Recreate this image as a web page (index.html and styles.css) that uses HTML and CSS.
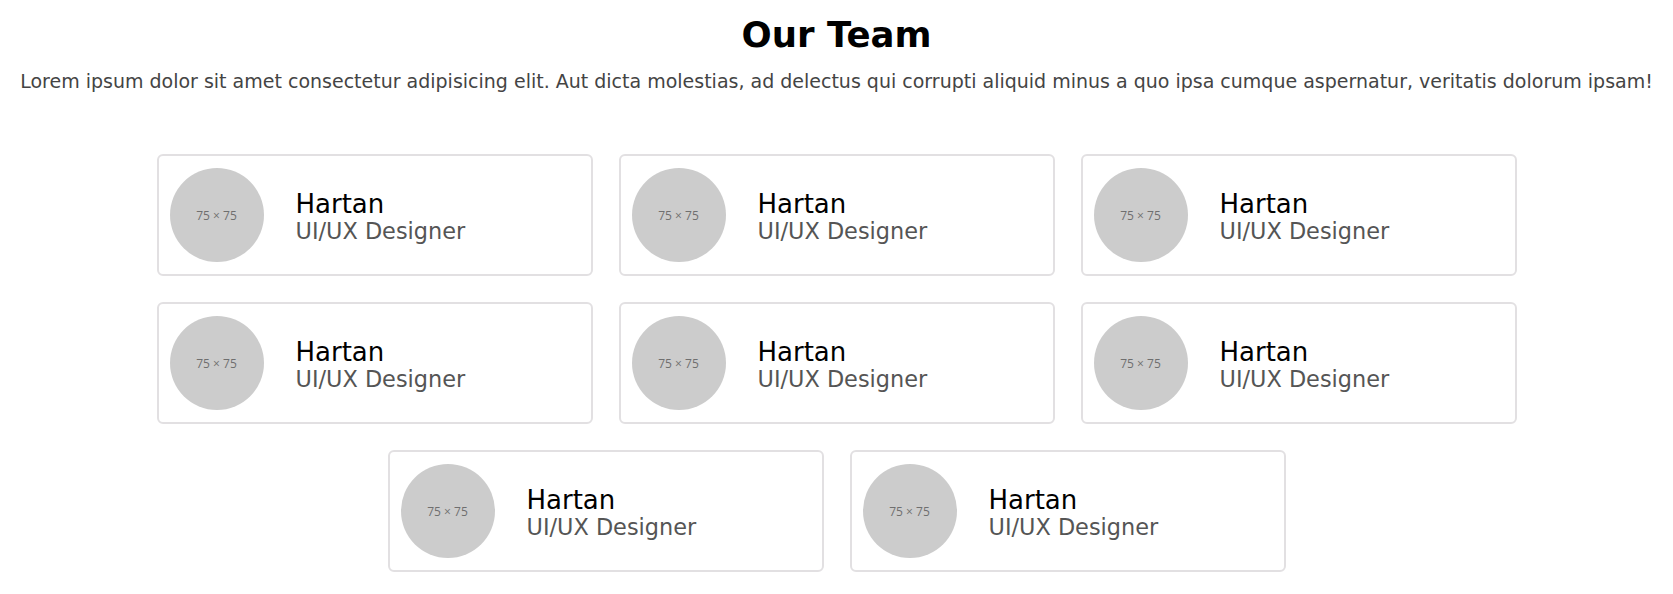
FILE: index.html
```html
<!DOCTYPE html>
<html lang="en">
<head>
<meta charset="utf-8">
<title>Our Team</title>
<link rel="stylesheet" href="styles.css">
</head>
<body>
<section class="team">
  <h1 class="team-title">Our Team</h1>
  <p class="team-intro">Lorem ipsum dolor sit amet consectetur adipisicing elit. Aut dicta molestias, ad delectus qui corrupti aliquid minus a quo ipsa cumque aspernatur, veritatis dolorum ipsam!</p>
  <div class="team-grid">
    <div class="member-card"><div class="avatar">75 × 75</div><div class="member-info"><div class="member-name">Hartan</div><div class="member-role">UI/UX Designer</div></div></div>
    <div class="member-card"><div class="avatar">75 × 75</div><div class="member-info"><div class="member-name">Hartan</div><div class="member-role">UI/UX Designer</div></div></div>
    <div class="member-card"><div class="avatar">75 × 75</div><div class="member-info"><div class="member-name">Hartan</div><div class="member-role">UI/UX Designer</div></div></div>
    <div class="member-card"><div class="avatar">75 × 75</div><div class="member-info"><div class="member-name">Hartan</div><div class="member-role">UI/UX Designer</div></div></div>
    <div class="member-card"><div class="avatar">75 × 75</div><div class="member-info"><div class="member-name">Hartan</div><div class="member-role">UI/UX Designer</div></div></div>
    <div class="member-card"><div class="avatar">75 × 75</div><div class="member-info"><div class="member-name">Hartan</div><div class="member-role">UI/UX Designer</div></div></div>
    <div class="member-card"><div class="avatar">75 × 75</div><div class="member-info"><div class="member-name">Hartan</div><div class="member-role">UI/UX Designer</div></div></div>
    <div class="member-card"><div class="avatar">75 × 75</div><div class="member-info"><div class="member-name">Hartan</div><div class="member-role">UI/UX Designer</div></div></div>
  </div>
</section>
</body>
</html>
```
FILE: styles.css
```css
* {
  box-sizing: border-box;
}

html, body {
  margin: 0;
  padding: 0;
  background: #ffffff;
}

body {
  font-family: "DejaVu Sans", "Liberation Sans", sans-serif;
  color: #000;
}

.team {
  display: flex;
  flex-direction: column;
  align-items: center;
  padding-top: 14px;
}

.team-title {
  margin: 0;
  font-size: 35.5px;
  font-weight: 700;
  line-height: 41px;
  color: #000;
  text-align: center;
}

.team-intro {
  margin: 13px 0 0;
  font-size: 19px;
  line-height: 27px;
  color: #444;
  text-align: center;
  white-space: nowrap;
}

.team-grid {
  width: 1360px;
  margin-top: 59px;
  display: flex;
  flex-wrap: wrap;
  justify-content: center;
  column-gap: 26px;
  row-gap: 26px;
}

.member-card {
  width: 436px;
  display: flex;
  align-items: center;
  padding: 12px 11px;
  border: 2px solid #e2e0e2;
  border-radius: 6px;
  background: #fff;
}

.avatar {
  flex: 0 0 94px;
  width: 94px;
  height: 94px;
  border-radius: 50%;
  background: #cccccc;
  display: flex;
  align-items: center;
  justify-content: center;
  font-family: "Open Sans", sans-serif;
  font-size: 12px;
  color: #6f6f6f;
}

.member-info {
  margin-left: 32px;
  margin-top: 5px;
  display: flex;
  flex-direction: column;
}

.member-name {
  font-size: 26px;
  line-height: 26px;
  color: #000;
}

.member-role {
  font-size: 22.4px;
  line-height: 28px;
  color: #555;
}
```
